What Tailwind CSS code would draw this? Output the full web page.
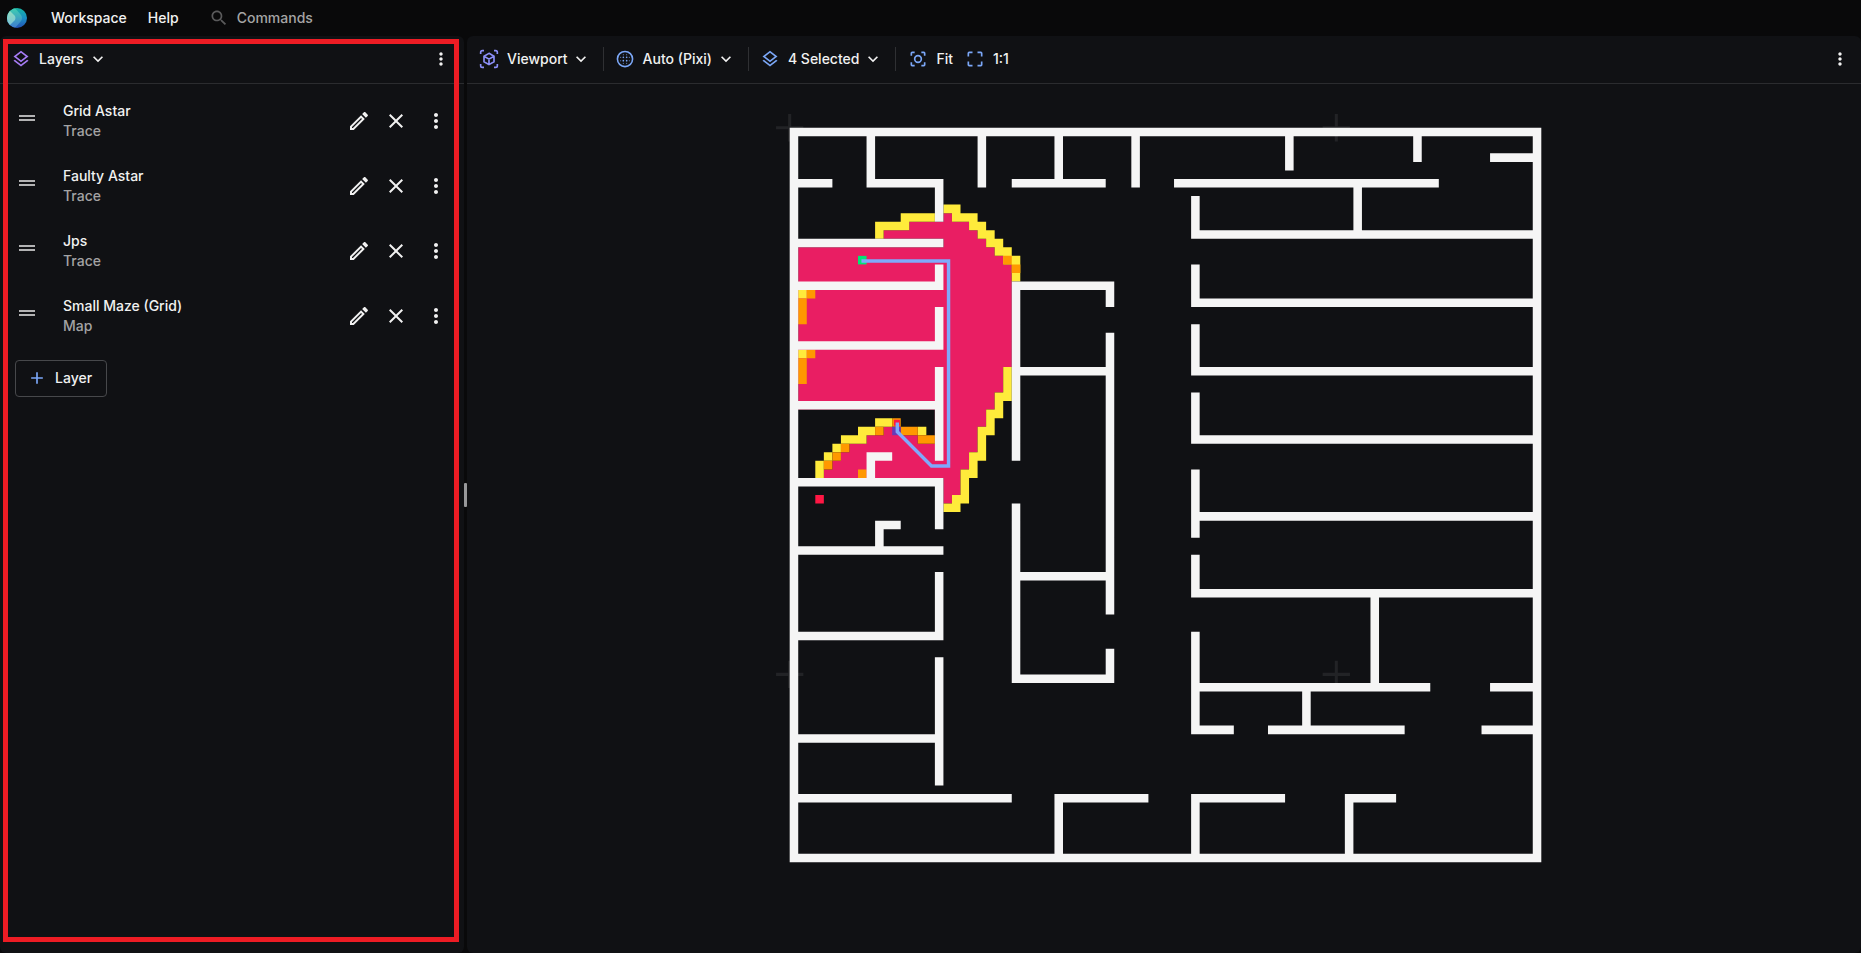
<!DOCTYPE html>
<html lang="en">
<head>
<meta charset="utf-8">
<title>Workspace</title>
<script src="https://cdn.jsdelivr.net/npm/@tailwindcss/browser@4"></script>
</head>
<body class="flex h-screen flex-col overflow-hidden bg-[#09090a] font-['Inter',sans-serif] text-sm font-medium text-[#f1f1f1]">

<!-- Shared icon symbols -->
<svg class="hidden" aria-hidden="true">
  <symbol id="layers" viewBox="0 0 24 24"><path fill="currentColor" d="M11.99 18.54l-7.37-5.73L3 14.07l9 7 9-7-1.63-1.27zM12 16l7.36-5.73L21 9l-9-7-9 7 1.63 1.27L12 16zm0-11.47L17.74 9 12 13.47 6.26 9 12 4.53z"/></symbol>
  <symbol id="chevron" viewBox="0 0 24 24"><path fill="currentColor" d="M7.41 8.59 12 13.17l4.59-4.58L18 10l-6 6-6-6z"/></symbol>
  <symbol id="more" viewBox="0 0 24 24"><path fill="currentColor" d="M12 8c1.1 0 2-.9 2-2s-.9-2-2-2-2 .9-2 2 .9 2 2 2zm0 2c-1.1 0-2 .9-2 2s.9 2 2 2 2-.9 2-2-.9-2-2-2zm0 6c-1.1 0-2 .9-2 2s.9 2 2 2 2-.9 2-2-.9-2-2-2z"/></symbol>
  <symbol id="edit" viewBox="0 0 24 24"><path fill="currentColor" d="m14.06 9.02.92.92L5.92 19H5v-.92l9.06-9.06M17.66 3c-.25 0-.51.1-.7.29l-1.83 1.83 3.75 3.75 1.83-1.83c.39-.39.39-1.02 0-1.41l-2.34-2.34c-.2-.2-.45-.29-.71-.29zm-3.6 3.19L3 17.25V21h3.75L17.81 9.94l-3.75-3.75z"/></symbol>
  <symbol id="close" viewBox="0 0 24 24"><path fill="currentColor" d="M19 6.41 17.59 5 12 10.59 6.41 5 5 6.41 10.59 12 5 17.59 6.41 19 12 13.41 17.59 19 19 17.59 13.41 12z"/></symbol>
  <symbol id="drag" viewBox="0 0 24 24"><path fill="currentColor" d="M20 9H4v2h16V9zM4 15h16v-2H4v2z"/></symbol>
  <symbol id="search" viewBox="0 0 24 24"><path fill="currentColor" d="M15.5 14h-.79l-.28-.27C15.41 12.59 16 11.11 16 9.5 16 5.91 13.09 3 9.5 3S3 5.91 3 9.5 5.91 16 9.5 16c1.61 0 3.09-.59 4.23-1.57l.27.28v.79l5 4.99L20.49 19l-4.99-5zm-6 0C7.01 14 5 11.99 5 9.5S7.01 5 9.5 5 14 7.01 14 9.5 11.99 14 9.5 14z"/></symbol>
  <symbol id="add" viewBox="0 0 24 24"><path fill="currentColor" d="M19 13h-6v6h-2v-6H5v-2h6V5h2v6h6z"/></symbol>
  <symbol id="cube" viewBox="0 0 24 24"><g fill="none" stroke="currentColor" stroke-width="2"><path d="M2 6V4a2 2 0 0 1 2-2h2M18 2h2a2 2 0 0 1 2 2v2M22 18v2a2 2 0 0 1-2 2h-2M6 22H4a2 2 0 0 1-2-2v-2"/><path d="M12 5.2l6 3.4v6.8l-6 3.4-6-3.4V8.6zM6 8.8l6 3.4 6-3.4M12 12.2v6.6"/></g></symbol>
  <symbol id="renderer" viewBox="0 0 24 24"><circle cx="12" cy="12" r="9.1" fill="none" stroke="currentColor" stroke-width="1.9"/><g fill="currentColor"><circle cx="10" cy="10" r="1"/><circle cx="14" cy="10" r="1"/><circle cx="10" cy="14" r="1"/><circle cx="14" cy="14" r="1"/><circle cx="10" cy="6.8" r=".6"/><circle cx="14" cy="6.8" r=".6"/><circle cx="10" cy="17.2" r=".6"/><circle cx="14" cy="17.2" r=".6"/><circle cx="6.8" cy="10" r=".6"/><circle cx="6.8" cy="14" r=".6"/><circle cx="17.2" cy="10" r=".6"/><circle cx="17.2" cy="14" r=".6"/></g></symbol>
  <symbol id="fit" viewBox="0 0 24 24"><g fill="none" stroke="currentColor" stroke-width="2"><path d="M4 8V5a1 1 0 0 1 1-1h3M16 4h3a1 1 0 0 1 1 1v3M20 16v3a1 1 0 0 1-1 1h-3M8 20H5a1 1 0 0 1-1-1v-3"/><circle cx="12" cy="12" r="4"/></g></symbol>
  <symbol id="full" viewBox="0 0 24 24"><path fill="none" stroke="currentColor" stroke-width="2" d="M4 9V5a1 1 0 0 1 1-1h4M15 4h4a1 1 0 0 1 1 1v4M20 15v4a1 1 0 0 1-1 1h-4M9 20H5a1 1 0 0 1-1-1v-4"/></symbol>
</svg>

<header class="flex h-9 shrink-0 items-center px-[7px]">
  <svg class="size-5" viewBox="0 0 20 20" aria-hidden="true">
    <defs>
      <linearGradient id="lg1" x1="0" y1="0" x2="0" y2="1"><stop offset="0" stop-color="#16b4a4"/><stop offset=".5" stop-color="#1a8fc4"/><stop offset="1" stop-color="#2553b4"/></linearGradient>
      <linearGradient id="lg2" x1="0" y1="0" x2="0" y2="1"><stop offset="0" stop-color="#3fd0b0"/><stop offset="1" stop-color="#3f7cd0"/></linearGradient>
      <linearGradient id="lg3" x1="0" y1="0" x2="0" y2="1"><stop offset="0" stop-color="#8fdcc0"/><stop offset="1" stop-color="#7cc4d4"/></linearGradient>
      <clipPath id="disc"><circle cx="10" cy="10" r="10"/></clipPath>
    </defs>
    <g clip-path="url(#disc)">
      <rect width="20" height="20" fill="url(#lg1)"/>
      <path d="M0 0h8l6 7q2 3 0 6l-6 7H0z" fill="url(#lg2)"/>
      <path d="M0 3h3l5 5q1 2 0 4l-5 5H0z" fill="url(#lg3)"/>
    </g>
  </svg>
  <nav class="ml-6 flex items-center gap-[21px]">
    <button type="button">Workspace</button>
    <button type="button">Help</button>
  </nav>
  <button type="button" class="ml-[30px] flex items-center gap-2 text-[#a5a5a5]">
    <svg class="size-5 text-[#5a5a5b]"><use href="#search"/></svg>Commands
  </button>
</header>

<main class="flex min-h-0 flex-1">
  <aside class="relative w-[464px] shrink-0 rounded-md bg-[#101114]">
    <div class="flex h-12 items-center border-b border-[#2b2c2f] pr-[13px] pb-px pl-[11px]">
      <button type="button" class="flex items-center">
        <svg class="size-5 text-[#a77cf5]"><use href="#layers"/></svg>
        <span class="ml-2">Layers</span>
        <svg class="ml-1 size-5"><use href="#chevron"/></svg>
      </button>
      <button type="button" class="ml-auto" aria-label="Panel options"><svg class="size-5"><use href="#more"/></svg></button>
    </div>

    <ul class="pt-1">
      <li class="flex h-[65px] items-center px-4">
        <svg class="mb-1.5 -ml-px size-6 text-[#b3b3b4]"><use href="#drag"/></svg>
        <div class="ml-6 flex-1 leading-5"><p>Grid Astar</p><p class="text-[#a3a3a4]">Trace</p></div>
        <button type="button" aria-label="Edit Grid Astar"><svg class="size-6"><use href="#edit"/></svg></button>
        <button type="button" class="ml-[13px]" aria-label="Remove Grid Astar"><svg class="size-6"><use href="#close"/></svg></button>
        <button type="button" class="ml-4" aria-label="More for Grid Astar"><svg class="size-6"><use href="#more"/></svg></button>
      </li>
      <li class="flex h-[65px] items-center px-4">
        <svg class="mb-1.5 -ml-px size-6 text-[#b3b3b4]"><use href="#drag"/></svg>
        <div class="ml-6 flex-1 leading-5"><p>Faulty Astar</p><p class="text-[#a3a3a4]">Trace</p></div>
        <button type="button" aria-label="Edit Faulty Astar"><svg class="size-6"><use href="#edit"/></svg></button>
        <button type="button" class="ml-[13px]" aria-label="Remove Faulty Astar"><svg class="size-6"><use href="#close"/></svg></button>
        <button type="button" class="ml-4" aria-label="More for Faulty Astar"><svg class="size-6"><use href="#more"/></svg></button>
      </li>
      <li class="flex h-[65px] items-center px-4">
        <svg class="mb-1.5 -ml-px size-6 text-[#b3b3b4]"><use href="#drag"/></svg>
        <div class="ml-6 flex-1 leading-5"><p>Jps</p><p class="text-[#a3a3a4]">Trace</p></div>
        <button type="button" aria-label="Edit Jps"><svg class="size-6"><use href="#edit"/></svg></button>
        <button type="button" class="ml-[13px]" aria-label="Remove Jps"><svg class="size-6"><use href="#close"/></svg></button>
        <button type="button" class="ml-4" aria-label="More for Jps"><svg class="size-6"><use href="#more"/></svg></button>
      </li>
      <li class="flex h-[65px] items-center px-4">
        <svg class="mb-1.5 -ml-px size-6 text-[#b3b3b4]"><use href="#drag"/></svg>
        <div class="ml-6 flex-1 leading-5"><p>Small Maze (Grid)</p><p class="text-[#a3a3a4]">Map</p></div>
        <button type="button" aria-label="Edit Small Maze (Grid)"><svg class="size-6"><use href="#edit"/></svg></button>
        <button type="button" class="ml-[13px]" aria-label="Remove Small Maze (Grid)"><svg class="size-6"><use href="#close"/></svg></button>
        <button type="button" class="ml-4" aria-label="More for Small Maze (Grid)"><svg class="size-6"><use href="#more"/></svg></button>
      </li>
    </ul>
    <button type="button" class="mt-3 ml-[15px] flex h-[37px] items-center gap-2 rounded border border-[#47484b] pr-[14px] pb-px pl-[11px]">
      <svg class="size-5 text-[#7ba7f7]"><use href="#add"/></svg>Layer
    </button>

    <!-- Highlight frame round the layers panel -->
    <div class="pointer-events-none absolute top-[3px] right-[5px] bottom-[11px] left-[3px] border-5 border-[#ed1c24]"></div>
  </aside>

  <div class="flex w-[3px] shrink-0 items-center" role="separator" aria-orientation="vertical"><div class="h-6 w-full rounded-[1px] bg-[#98989a]"></div></div>

  <section class="flex min-w-0 flex-1 flex-col rounded-md bg-[#101114]">
    <div class="flex h-12 shrink-0 items-center gap-3 border-b border-[#2b2c2f] pr-[11px] pb-px pl-3">
      <button type="button" class="flex items-center"><svg class="size-5 text-[#8c8ff8]"><use href="#cube"/></svg><span class="ml-2">Viewport</span><svg class="ml-[3px] size-5"><use href="#chevron"/></svg></button>
      <div class="-mr-px h-6 w-px bg-[#2f3033]"></div>
      <button type="button" class="flex items-center"><svg class="size-5 text-[#7ba7f7]"><use href="#renderer"/></svg><span class="ml-2">Auto (Pixi)</span><svg class="ml-1 size-5"><use href="#chevron"/></svg></button>
      <div class="-mr-px h-6 w-px bg-[#2f3033]"></div>
      <button type="button" class="flex items-center"><svg class="size-5 text-[#7ba7f7]"><use href="#layers"/></svg><span class="ml-2">4 Selected</span><svg class="ml-1 size-5"><use href="#chevron"/></svg></button>
      <div class="-mr-px h-6 w-px bg-[#2f3033]"></div>
      <button type="button" class="ml-px flex items-center gap-2"><svg class="size-5 text-[#7ba7f7]"><use href="#fit"/></svg>Fit</button>
      <button type="button" class="flex items-center gap-2"><svg class="size-5 text-[#7ba7f7]"><use href="#full"/></svg>1:1</button>
      <button type="button" class="ml-auto" aria-label="Viewport options"><svg class="size-5"><use href="#more"/></svg></button>
    </div>

    <!-- Maze canvas: one user unit is one grid cell -->
    <svg class="min-h-0 w-full flex-1" viewBox="-37.78 -5.12 163.21 101.74" role="img" aria-label="Maze with search trace">
      <path stroke="#222326" stroke-width=".36" d="M-1.6 0h3.2M0-1.6v3.2M62.4 0h3.2M64-1.6v3.2M-1.6 64h3.2M0 62.4v3.2M62.4 64h3.2M64 62.4v3.2"/>
      <!-- closed nodes -->
      <path fill="#e91e63" d="M1 14h17v-1h-7v-1h3v-1h4v-1h1v1h2v1h1v1h1v1h1v1h1v1h1v12h-1v3h-1v2h-1v2h-1v3h-1v2h-1v3h-1v1h-1v-3H4v-1h1v-1h1v-1h1v-1h2v-1h2v-1h2v1h2v1h2v-4H1z"/>
      <!-- frontier nodes -->
      <path fill="#ffeb3b" d="M18 9h2v1h2v1h1v1h1v1h1v1h1v1h1v3h-1v-2h-1v-1h-1v-1h-1v-1h-1v-1h-1v-1h-2v-1h-1zM13 10h4v1h-3v1h-3v1h-1v-2h3zM25 28h1v4h-1v2h-1v2h-1v3h-1v2h-1v3h-1v1h-2v-1h1v-1h1v-3h1v-2h1v-3h1v-2h1v-2h1zM1 19h1v1H1zM1 26h1v1H1zM10 34h2v1h-2v1H9v1H6v1H5v1H4v2H3v-2h1v-1h1v-1h1v-1h2v-1h2zM15 35h1v1h-1z"/>
      <path fill="#ff9800" d="M25 15h1v1h1v1h-1v-1h-1zM2 19h1v1H2v3H1v-3h1zM2 26h1v1H2v3H1v-3h1zM12 34h1v1h-1zM10 35h1v1h-1zM13 35h2v1h2v1h-2v-1h-2zM6 37h1v1H6v1H5v1H4v-1h1v-1h1zM8 40h1v1H8z"/>
      <path fill="#673ab7" d="M12 35h1v1h-1z"/>
      <path fill="#ff1744" d="M12.2 34.2h.7v.7h-.7zM3 43h1v1H3z"/>
      <path fill="#00e676" d="M8 15h1v1H8z"/>
      <!-- walls -->
      <path fill="#f5f5f5" fill-rule="nonzero" d="M0 0h88v1H0zM0 0h1v86H0zM87 0h1v86h-1zM0 85h88v1H0z
        M9 0h1v7H9zM0 6h5v1H0zM9 6h9v1H9zM17 6h1v5h-1zM22 0h1v7h-1zM31 0h1v7h-1zM26 6h11v1H26zM40 0h1v7h-1z
        M0 13h18v1H0zM0 18h18v1H0zM17 16h1v3h-1zM26 18h12v1H26zM37 18h1v3h-1zM0 25h18v1H0zM17 21h1v5h-1zM17 28h1v11h-1z
        M0 32h18v1H0zM26 28h12v1H26zM37 24h1v33h-1zM26 18h1v21h-1zM0 41h18v1H0zM17 41h1v6h-1zM9 38h3v1H9zM9 38h1v4H9z
        M10 46h3v1h-3zM10 46h1v4h-1zM0 49h18v1H0zM17 52h1v8h-1zM0 59h18v1H0zM17 62h1v15h-1zM0 71h18v1H0zM0 78h26v1H0z
        M31 78h11v1H31zM31 78h1v8h-1zM26 44h1v21h-1zM26 64h12v1H26zM37 61h1v4h-1zM26 52h12v1H26z
        M58 0h1v5h-1zM73 0h1v4h-1zM82 3h6v1h-6zM45 6h31v1H45zM66 6h1v7h-1zM47 8h1v5h-1zM47 12h41v1H47z
        M47 16h1v5h-1zM47 20h41v1H47zM47 23h1v6h-1zM47 28h41v1H47zM47 31h1v6h-1zM47 36h41v1H47zM47 40h1v8h-1zM47 45h41v1H47z
        M47 50h1v5h-1zM47 54h41v1H47zM68 54h1v12h-1zM47 59h1v12h-1zM47 65h28v1H47zM82 65h6v1h-6zM47 70h5v1h-5zM56 70h16v1H56z
        M81 70h7v1h-7zM60 65h1v6h-1zM47 78h11v1H47zM47 78h1v8h-1zM65 78h6v1h-6zM65 78h1v8h-1z"/>
      <!-- solution path -->
      <path fill="none" stroke="#7fa9fb" stroke-width=".4" d="M8.4 15.6H18.6V39.6H16.6L12.6 35.6V34.5"/>
    </svg>
  </section>
</main>
</body>
</html>
